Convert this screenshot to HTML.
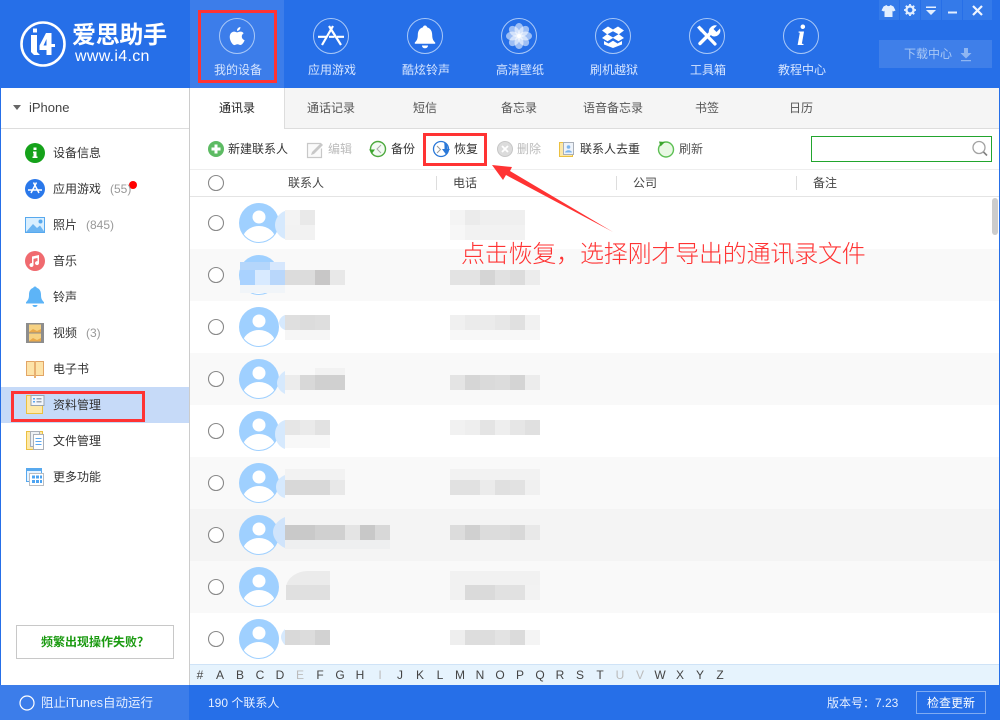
<!DOCTYPE html>
<html lang="zh-CN">
<head>
<meta charset="utf-8">
<title>爱思助手</title>
<style>
html,body{margin:0;padding:0;width:1000px;height:720px;overflow:hidden;background:#fff}
body{position:relative;font-family:"Liberation Sans","Noto Sans CJK SC",sans-serif;font-size:12px;color:#333}
.b{position:absolute}
.t{position:absolute;white-space:nowrap;line-height:16px;font-size:12px}
.n{color:#d6e5ff;width:94px;text-align:center;top:62px}
.tab{color:#555;width:94px;text-align:center;top:100px}
.s{left:53px;color:#333}
.c{color:#999}
.h{top:175px;color:#444}
.az{position:absolute;left:190px;top:664px;height:21px;width:802px;display:flex;line-height:22px;color:#444;font-size:12px}
.az span{width:20px;text-align:center}
.az i{font-style:normal;color:#bbb;width:20px;text-align:center}
svg{position:absolute;left:0;top:0}
</style>
</head>
<body>
<!-- backgrounds -->
<div class="b" style="left:0;top:0;width:1000px;height:88px;background:#266fe8"></div>
<div class="b" style="left:190px;top:0;width:94px;height:88px;background:#3c7dea"></div>
<div class="b" style="left:190px;top:88px;width:810px;height:40px;background:#f5f5f5"></div>
<div class="b" style="left:190px;top:128px;width:810px;height:1px;background:#ddd"></div>
<div class="b" style="left:190px;top:88px;width:94px;height:41px;background:#fff"></div>
<div class="b" style="left:284px;top:88px;width:1px;height:40px;background:#ddd"></div>
<div class="b" style="left:0;top:88px;width:1px;height:597px;background:#266fe8"></div>
<div class="b" style="left:999px;top:88px;width:1px;height:597px;background:#266fe8"></div>
<div class="b" style="left:189px;top:88px;width:1px;height:597px;background:#ccc"></div>
<div class="b" style="left:1px;top:128px;width:188px;height:1px;background:#ddd"></div>
<div class="b" style="left:1px;top:387px;width:188px;height:36px;background:#c6daf8"></div>
<div class="b" style="left:190px;top:169px;width:809px;height:1px;background:#eee"></div>
<div class="b" style="left:190px;top:196px;width:809px;height:1px;background:#e4e4e4"></div>
<div class="b" style="left:190px;top:249px;width:809px;height:52px;background:#f9f9f9"></div>
<div class="b" style="left:190px;top:353px;width:809px;height:52px;background:#f9f9f9"></div>
<div class="b" style="left:190px;top:457px;width:809px;height:52px;background:#f9f9f9"></div>
<div class="b" style="left:190px;top:509px;width:809px;height:52px;background:#f4f4f4"></div>
<div class="b" style="left:190px;top:561px;width:809px;height:52px;background:#f9f9f9"></div>
<div class="b" style="left:190px;top:664px;width:809px;height:21px;background:#e6f3fd;box-shadow:inset 0 1px 0 #cfe3f7"></div>
<div class="b" style="left:0;top:685px;width:1000px;height:35px;background:#266fe8"></div>
<div class="b" style="left:0;top:685px;width:189px;height:35px;background:#3c7dea"></div>
<!-- window buttons -->
<div class="b" style="left:879px;top:0;width:20px;height:20px;background:#347ae9"></div>
<div class="b" style="left:900px;top:0;width:20px;height:20px;background:#347ae9"></div>
<div class="b" style="left:921px;top:0;width:20px;height:20px;background:#347ae9"></div>
<div class="b" style="left:942px;top:0;width:20px;height:20px;background:#347ae9"></div>
<div class="b" style="left:963px;top:0;width:29px;height:20px;background:#347ae9"></div>
<div class="b" style="left:879px;top:40px;width:113px;height:28px;background:#3f7fe9"></div>
<!-- search -->
<div class="b" style="left:811px;top:136px;width:179px;height:24px;border:1px solid #22a52e"></div>
<!-- header separators -->
<div class="b" style="left:436px;top:176px;width:1px;height:14px;background:#ddd"></div>
<div class="b" style="left:616px;top:176px;width:1px;height:14px;background:#ddd"></div>
<div class="b" style="left:796px;top:176px;width:1px;height:14px;background:#ddd"></div>
<div class="b" style="left:992px;top:198px;width:6px;height:37px;background:#ccc;border-radius:3px"></div>
<!-- bottom help button -->
<div class="b" style="left:16px;top:625px;width:156px;height:32px;border:1px solid #c8c8c8;background:#fff"></div>
<div class="b" style="left:916px;top:691px;width:68px;height:21px;border:1px solid #7fabf2"></div>

<svg width="1000" height="720" viewBox="0 0 1000 720" xmlns="http://www.w3.org/2000/svg">
<defs>
<clipPath id="avc"><circle cx="259" cy="223" r="19"/></clipPath>
<g id="row">
<circle cx="216" cy="223" r="7.5" fill="#fff" stroke="#8a8a8a" stroke-width="1.100"/>
<circle cx="259" cy="223" r="20" fill="#9fd0ff"/>
<circle cx="259" cy="217" r="6.500" fill="#fff"/>
<ellipse cx="259" cy="241" rx="17" ry="15" fill="#fff" clip-path="url(#avc)"/>
</g>
</defs>
<!-- logo -->
<circle cx="43" cy="44" r="21.500" fill="none" stroke="#fff" stroke-width="2.600"/>
<path d="M31 35h6v17l3 3h-6l-3-3zM33 28.500h4v4h-4z" fill="#fff"/>
<path d="M46 33h5.500v22h-5v-5h-7v-4.500zM46.500 39l-3 6.500h3z" fill="#fff" fill-rule="evenodd"/>
<path d="M51 44h4v3h-4z" fill="#fff"/>
<!-- nav circles -->
<g fill="none" stroke="#a9c8f7" stroke-width="1">
<circle cx="237" cy="36" r="17.500"/><circle cx="331" cy="36" r="17.500"/><circle cx="425" cy="36" r="17.500"/><circle cx="519" cy="36" r="17.500"/><circle cx="613" cy="36" r="17.500"/><circle cx="707" cy="36" r="17.500"/><circle cx="801" cy="36" r="17.500"/>
</g>
<!-- apple -->
<g transform="translate(0,-1)" fill="#fff">
<path d="M241.800 37.600c0-2.200 1.800-3.200 1.900-3.300-1-1.500-2.600-1.700-3.200-1.700-1.400-.1-2.700.8-3.400.8-.7 0-1.800-.8-2.900-.8-1.500 0-2.900.9-3.700 2.200-1.600 2.700-.4 6.800 1.100 9 .8 1.100 1.700 2.300 2.900 2.300 1.200-.1 1.600-.8 3-.8 1.400 0 1.800.8 3 .7 1.200 0 2-1.100 2.800-2.200.9-1.300 1.200-2.500 1.300-2.600-.1 0-2.800-1-2.800-3.600z"/>
<path d="M239.500 30.800c.6-.8 1-1.800.9-2.800-.9 0-1.900.6-2.500 1.300-.6.6-1 1.600-.9 2.600 1 .1 1.900-.4 2.500-1.100z"/>
</g>
<!-- app store -->
<g stroke="#fff" stroke-width="2.200" fill="none">
<path d="M333 26L322 45"/><path d="M329 26L341 45"/>
<path d="M318 36.800h8M329 36.800h5.500M337 36.800h7"/>
</g>
<!-- bell -->
<path d="M425 25.500c1.200 0 2 .8 2 1.800 3.600 1 5.200 4 5.200 7.700 0 4 1.300 6 3 7.500v1.300h-20.400v-1.300c1.700-1.500 3-3.500 3-7.500 0-3.700 1.600-6.700 5.200-7.700 0-1 .8-1.800 2-1.800zM422 45.500h6c0 1.700-1.300 2.800-3 2.800s-3-1.100-3-2.800z" fill="#fff"/>
<!-- flower -->
<g fill="#fff" fill-opacity=".55">
<ellipse cx="519" cy="29.500" rx="4.500" ry="6.500"/><ellipse cx="519" cy="42.500" rx="4.500" ry="6.500"/><ellipse cx="512.500" cy="36" rx="6.500" ry="4.500"/><ellipse cx="525.500" cy="36" rx="6.500" ry="4.500"/>
<ellipse cx="514.500" cy="31.500" rx="4.500" ry="6.500" transform="rotate(-45 514.500 31.500)"/><ellipse cx="523.500" cy="31.500" rx="4.500" ry="6.500" transform="rotate(45 523.500 31.500)"/>
<ellipse cx="514.500" cy="40.500" rx="4.500" ry="6.500" transform="rotate(45 514.500 40.500)"/><ellipse cx="523.500" cy="40.500" rx="4.500" ry="6.500" transform="rotate(-45 523.500 40.500)"/>
</g>
<circle cx="519" cy="36" r="2" fill="#fff"/>
<!-- box -->
<path d="M608 26.500l5 3 5-3 6 4-5 3.800 5 3.700-5.500 3.200-5.500-3.200-5.500 3.200-5.500-3.200 5-3.700-5-3.800zM607.500 34.300l5.500 3.200 5.500-3.200-5.500-3.100z" fill="#fff" fill-rule="evenodd"/>
<path d="M604 41l4.500 2.500 4.500-2.700 4.500 2.700 4.500-2.500v3.500l-9 3.500-9-3.500z" fill="#fff"/>
<!-- tools -->
<g stroke="#fff" fill="none" stroke-linecap="round">
<path d="M700 43.500L712 31.500" stroke-width="3.400"/>
<path d="M701 29.500l14 14.500" stroke-width="3.200"/>
</g>
<path d="M711 27a6 6 0 0 1 6-1.500l-3.500 3.500 3 3 3.500-3.500a6 6 0 0 1-8 7.500l-3-3a6 6 0 0 1 2-6z" fill="#fff"/>
<path d="M697 27.500l2.500-2 4 4-2.500 2.500z" fill="#fff"/>
<!-- window icons -->
<path d="M884 6l3-1.500c1 1.500 3 1.500 4 0l3 1.500 2 4-2.500 1-.5-1v6.500h-8v-6.500l-.5 1-2.500-1z" fill="#e3efff" transform="translate(-.5,.5)"/>
<circle cx="910" cy="10" r="3.600" fill="none" stroke="#e3efff" stroke-width="2.400"/>
<g stroke="#e3efff" stroke-width="1.800"><path d="M910 4v2.500M910 13.500V16M904 10h2.500M913.500 10H916M905.800 5.800l1.700 1.700M912.500 12.500l1.700 1.700M905.800 14.200l1.700-1.700M912.500 7.500l1.700-1.700"/></g>
<path d="M926 6.500h10v1.500h-10zM926 10h10l-5 5z" fill="#e3efff"/>
<path d="M948 11.500h9v2h-9z" fill="#e3efff"/>
<path d="M973 6l9 9M982 6l-9 9" stroke="#f0f6ff" stroke-width="2.200"/>
<path d="M964 48h4v5h3.500l-5.500 5.500-5.500-5.500h3.500zM961 60h10v1.300h-10z" fill="#8fb6f2"/>
<!-- sidebar icons -->
<path d="M13 105h8l-4 5z" fill="#666"/>
<circle cx="35" cy="153" r="10" fill="#15a21a"/>
<path d="M33.500 147.500h3v2.500h-3zM33 151.500h3.500v5h1v1.500h-5v-1.500h1v-3.500h-.5z" fill="#fff"/>
<circle cx="35" cy="189" r="10" fill="#2a78ea"/>
<path d="M36.500 182.500L31 193M33.500 182.500L39 193M28 190h14" stroke="#fff" stroke-width="1.500" fill="none"/>
<rect x="25.500" y="217.500" width="19" height="15" fill="#d9efff" stroke="#58a9ee"/>
<path d="M26 232l7-8 4 4 3-2.500 4.500 6.500z" fill="#6cb5f2"/>
<circle cx="40.500" cy="221.500" r="2" fill="#58a9ee"/>
<circle cx="35" cy="261" r="10" fill="#f06a6f"/>
<path d="M32 256.500l7-1.500v8a2 2 0 1 1-1.500-1.800V258l-4 .9v6a2 2 0 1 1-1.500-1.800z" fill="#fff"/>
<path d="M35 286.500c1 0 1.500.6 1.700 1.300 3 1 4.300 3.500 4.300 7 0 4 1 5.500 3 7.500v1.200h-18v-1.200c2-2 3-3.500 3-7.500 0-3.500 1.300-6 4.300-7 .2-.7.700-1.300 1.700-1.300z" fill="#5db4f7"/>
<path d="M32.500 305h5c0 1-1 2-2.500 2s-2.500-1-2.500-2z" fill="#5db4f7"/>
<rect x="26" y="323" width="18" height="20" fill="#8d8d8d"/>
<rect x="29" y="324.500" width="12" height="8" fill="#f6d283"/><rect x="29" y="333.500" width="12" height="8" fill="#f6d283"/>
<path d="M29 332l4-3 4 2 4-2v3.500H29zM29 341l4-3 4 2 4-2v3.500H29z" fill="#e9a94a"/>
<path d="M26.500 361.500h8v14h-8zM35.500 361.500h8v14h-8z" fill="#fde3a8" stroke="#e2a566"/>
<rect x="34" y="361" width="2" height="17" fill="#e8b070"/>
<rect x="26.500" y="395.500" width="16" height="18" fill="#fde8a8" stroke="#ebc040"/>
<rect x="31" y="395.500" width="13" height="10" fill="#f3f6fb" stroke="#9aa4b0"/>
<path d="M33 398h2v1.500h-2zM33 401h2v1.500h-2z" fill="#5aa7f0"/><path d="M36.500 398h5v1.500h-5zM36.500 401h5v1.500h-5z" fill="#9aa4b0"/>
<rect x="26.500" y="431.500" width="16" height="18" fill="#fde8a8" stroke="#ebc040"/>
<rect x="30.500" y="431.500" width="9" height="15" fill="#eef1f5" stroke="#a9afb8"/>
<rect x="33.500" y="434.500" width="10" height="15" fill="#fff" stroke="#a9afb8"/>
<path d="M35.500 438.500h6M35.500 441.500h6M35.500 444.500h6" stroke="#5aa7f0"/>
<rect x="26.500" y="468.500" width="15" height="13" fill="#e6f3ff" stroke="#58a9ee"/>
<rect x="26" y="468" width="16" height="3" fill="#58a9ee"/>
<rect x="29.500" y="473.500" width="14" height="12" fill="#fff" stroke="#b9bdc2"/>
<g fill="#4da4f2"><rect x="32" y="475.500" width="3" height="3"/><rect x="36" y="475.500" width="3" height="3"/><rect x="40" y="475.500" width="2" height="3"/><rect x="32" y="480" width="3" height="3"/><rect x="36" y="480" width="3" height="3"/><rect x="40" y="480" width="2" height="3"/></g>
<circle cx="133" cy="185" r="4" fill="#f00"/>
<!-- toolbar icons -->
<circle cx="216" cy="149" r="8" fill="#5dbb63"/>
<path d="M214.500 144.500h3v3h3v3h-3v3h-3v-3h-3v-3h3z" fill="#fff"/>
<path d="M321 143.500h-13.500v14h14v-9" fill="#fafafa" stroke="#c8c8c8" stroke-width="1.200"/>
<path d="M311 155l1-3 9-9 2 2-9 9z" fill="#c8c8c8"/>
<circle cx="378" cy="149" r="7.500" fill="#f3fbf3" stroke="#4eaa3f" stroke-width="1.400"/>
<path d="M369 149.500h6l-3 4z" fill="#3da52f"/>
<path d="M381 145l-4 4 4 4" fill="none" stroke="#aaa" stroke-width="1"/>
<circle cx="441" cy="149" r="7.500" fill="#fff" stroke="#2a78d8" stroke-width="1.300"/>
<path d="M437 146l3.500 3.500-3.500 3.500" fill="none" stroke="#999" stroke-width="1"/>
<path d="M444 142c3 1.500 3.500 4 3.500 7h2.500l-4 5.500-4-5.500h2.500c0-2.500 0-5-.5-7z" fill="#2a78d8"/>
<circle cx="505" cy="149" r="7.500" fill="#dcdcdc" stroke="#c6c6c6" stroke-width="1"/>
<path d="M502 146l6 6M508 146l-6 6" stroke="#fff" stroke-width="1.800"/>
<rect x="559.500" y="142.500" width="13" height="14" fill="#fde8a8" stroke="#ebc040"/>
<rect x="563.500" y="142.500" width="10" height="12" fill="#eef3fa" stroke="#a9afb8"/>
<circle cx="568.500" cy="147" r="1.800" fill="#7db4ec"/><path d="M565 152.500c.5-3 6.500-3 7 0z" fill="#7db4ec"/>
<circle cx="666" cy="149.500" r="7.500" fill="#e9f8e4" stroke="#5cbf53" stroke-width="1.400"/>
<path d="M659 141.500l6 .5-4.500 4.500z" fill="#3da52f"/>
<circle cx="979" cy="147.500" r="6" fill="none" stroke="#a2a2a2" stroke-width="1.300"/>
<path d="M983.500 152l3.500 3.500" stroke="#808080" stroke-width="1.600"/>
<circle cx="216" cy="183" r="7.500" fill="#fff" stroke="#8a8a8a" stroke-width="1.100"/>
<!-- rows -->
<use href="#row"/><use href="#row" y="52"/><use href="#row" y="104"/><use href="#row" y="156"/><use href="#row" y="208"/><use href="#row" y="260"/><use href="#row" y="312"/><use href="#row" y="364"/><use href="#row" y="416"/>
<!-- mosaics row1 -->
<path d="M285 211c-6 2-10 8-10 14s4 12 10 14z" fill="#d6e9fd"/>
<g><rect x="285" y="210" width="15" height="15" fill="#f3f3f3"/><rect x="300" y="210" width="15" height="15" fill="#e9e9e9"/><rect x="285" y="225" width="30" height="15" fill="#f2f2f2"/>
<rect x="450" y="210" width="15" height="15" fill="#f4f4f4"/><rect x="465" y="210" width="15" height="15" fill="#ebebeb"/><rect x="480" y="210" width="45" height="15" fill="#efefef"/><rect x="450" y="225" width="15" height="15" fill="#f7f7f7"/><rect x="465" y="225" width="60" height="15" fill="#f2f2f2"/></g>
<!-- row2 -->
<rect x="240" y="262" width="30" height="8" fill="#b4d6fb"/><rect x="270" y="262" width="15" height="8" fill="#d6e7fd"/>
<rect x="240" y="270" width="15" height="15" fill="#a9d2ff"/><rect x="255" y="270" width="15" height="15" fill="#d8eaff"/><rect x="270" y="270" width="15" height="15" fill="#b9d7fb"/>
<rect x="240" y="285" width="45" height="8" fill="#f1f5f9"/>
<rect x="285" y="270" width="30" height="15" fill="#dcdcdc"/><rect x="315" y="270" width="15" height="15" fill="#c8c7c7"/><rect x="330" y="270" width="15" height="15" fill="#e8e8e8"/>
<rect x="450" y="270" width="30" height="15" fill="#e3e3e3"/><rect x="480" y="270" width="15" height="15" fill="#d5d5d5"/><rect x="495" y="270" width="15" height="15" fill="#e1e1e1"/><rect x="510" y="270" width="15" height="15" fill="#dcdcdc"/><rect x="525" y="270" width="15" height="15" fill="#ececec"/>
<!-- row3 -->
<path d="M285 315c-3 1-6 4-6 7.500s3 6.500 6 7.500z" fill="#d6e9fd"/>
<rect x="285" y="315" width="15" height="15" fill="#dfdfdf"/><rect x="300" y="315" width="15" height="15" fill="#dcdcdc"/><rect x="315" y="315" width="15" height="15" fill="#dedede"/>
<rect x="285" y="330" width="45" height="10" fill="#f6f6f6"/>
<rect x="450" y="315" width="15" height="15" fill="#f0f0f0"/><rect x="465" y="315" width="30" height="15" fill="#ebebeb"/><rect x="495" y="315" width="15" height="15" fill="#e7e7e7"/><rect x="510" y="315" width="15" height="15" fill="#e0e0e0"/><rect x="525" y="315" width="15" height="15" fill="#f1f1f1"/>
<rect x="450" y="330" width="90" height="10" fill="#f8f8f8"/>
<!-- row4 -->
<path d="M285 371c-4 2-8 7-8 12s4 9 8 11z" fill="#d6e9fd"/>
<rect x="285" y="375" width="15" height="15" fill="#ececec"/><rect x="300" y="375" width="15" height="15" fill="#d8d8d8"/><rect x="315" y="375" width="30" height="15" fill="#d0d0d0"/>
<rect x="315" y="368" width="30" height="7" fill="#f2f2f2"/>
<rect x="450" y="375" width="15" height="15" fill="#e4e4e4"/><rect x="465" y="375" width="15" height="15" fill="#d6d6d6"/><rect x="480" y="375" width="15" height="15" fill="#dadada"/><rect x="495" y="375" width="15" height="15" fill="#dcdcdc"/><rect x="510" y="375" width="15" height="15" fill="#d4d4d4"/><rect x="525" y="375" width="15" height="15" fill="#ececec"/>
<!-- row5 -->
<path d="M285 420c-6 2-10 7-10 14s4 13 10 15z" fill="#d6e9fd"/>
<rect x="285" y="420" width="15" height="15" fill="#e6e6e6"/><rect x="300" y="420" width="15" height="15" fill="#eaeaea"/><rect x="315" y="420" width="15" height="15" fill="#e2e2e2"/>
<rect x="285" y="435" width="45" height="13" fill="#f8f8f8"/>
<rect x="450" y="420" width="15" height="15" fill="#f1f1f1"/><rect x="465" y="420" width="15" height="15" fill="#eeeeee"/><rect x="480" y="420" width="15" height="15" fill="#e4e4e4"/><rect x="495" y="420" width="15" height="15" fill="#eeeeee"/><rect x="510" y="420" width="15" height="15" fill="#e6e6e6"/><rect x="525" y="420" width="15" height="15" fill="#e0e0e0"/>
<!-- row6 -->
<path d="M285 475c-5 2-9 6-9 12s4 10 9 11z" fill="#d6e9fd"/>
<rect x="285" y="469" width="60" height="11" fill="#f2f2f2"/>
<rect x="285" y="480" width="45" height="15" fill="#d8d8d8"/><rect x="330" y="480" width="15" height="15" fill="#e8e8e8"/>
<rect x="450" y="469" width="90" height="11" fill="#f2f2f2"/>
<rect x="450" y="480" width="30" height="15" fill="#e1e1e1"/><rect x="480" y="480" width="15" height="15" fill="#ebebeb"/><rect x="495" y="480" width="15" height="15" fill="#e0e0e0"/><rect x="510" y="480" width="15" height="15" fill="#e2e2e2"/><rect x="525" y="480" width="15" height="15" fill="#f0f0f0"/>
<!-- row7 -->
<path d="M285 517c-7 3-12 9-12 15s5 13 12 16z" fill="#d0e4fb"/>
<rect x="285" y="525" width="30" height="15" fill="#c9c9c9"/><rect x="315" y="525" width="30" height="15" fill="#d0d0d0"/><rect x="345" y="525" width="15" height="15" fill="#e4e4e4"/><rect x="360" y="525" width="15" height="15" fill="#c8c8c8"/><rect x="375" y="525" width="15" height="15" fill="#d8d8d8"/>
<rect x="285" y="540" width="105" height="9" fill="#eeeff0"/>
<rect x="450" y="525" width="15" height="15" fill="#dcdcdc"/><rect x="465" y="525" width="15" height="15" fill="#d0d0d0"/><rect x="480" y="525" width="30" height="15" fill="#dcdcdc"/><rect x="510" y="525" width="15" height="15" fill="#d8d8d8"/><rect x="525" y="525" width="15" height="15" fill="#e8e8e8"/>
<!-- row8 -->
<path d="M286 600v-12c0-9 10-17 22-17h22v29z" fill="#ebebeb"/>
<path d="M286 600v-15h44v15z" fill="#e0e0e0"/>
<rect x="450" y="571" width="90" height="14" fill="#f1f1f1"/>
<rect x="450" y="585" width="15" height="15" fill="#f1f1f1"/><rect x="465" y="585" width="30" height="15" fill="#dadada"/><rect x="495" y="585" width="30" height="15" fill="#e1e1e1"/><rect x="525" y="585" width="15" height="15" fill="#f2f2f2"/>
<!-- row9 -->
<path d="M285 629c-2 2-4 5-4 8s2 6 4 8z" fill="#d6e9fd"/>
<rect x="285" y="630" width="15" height="15" fill="#d9d9d9"/><rect x="300" y="630" width="15" height="15" fill="#dcdcdc"/><rect x="315" y="630" width="15" height="15" fill="#d2d2d2"/>
<rect x="450" y="630" width="15" height="15" fill="#eeeeee"/><rect x="465" y="630" width="30" height="15" fill="#dddddd"/><rect x="495" y="630" width="15" height="15" fill="#e3e3e3"/><rect x="510" y="630" width="15" height="15" fill="#dbdbdb"/><rect x="525" y="630" width="15" height="15" fill="#f4f4f4"/>
<!-- footer circle -->
<circle cx="27" cy="703" r="7" fill="none" stroke="#fff" stroke-width="1.200"/>
</svg>

<!-- logo text -->
<div class="t" style="left:72px;top:22px;font-size:24px;line-height:28px;font-weight:700;color:#fff;letter-spacing:-.3px">爱思助手</div>
<div class="t" style="left:75px;top:48px;font-size:16px;line-height:18px;color:#fff;letter-spacing:.3px">www.i4.cn</div>
<!-- nav -->
<div class="t n" style="left:191px">我的设备</div>
<div class="t n" style="left:285px">应用游戏</div>
<div class="t n" style="left:379px">酷炫铃声</div>
<div class="t n" style="left:473px">高清壁纸</div>
<div class="t n" style="left:567px">刷机越狱</div>
<div class="t n" style="left:661px">工具箱</div>
<div class="t n" style="left:755px">教程中心</div>
<div class="t" style="left:801px;width:0;top:22px;font:italic 700 30px/28px 'Liberation Serif',serif;color:#fff;display:flex;justify-content:center">i</div>
<div class="t" style="left:904px;top:46px;color:#a9c8f5">下载中心</div>
<!-- tabs -->
<div class="t tab" style="left:190px;color:#222">通讯录</div>
<div class="t tab" style="left:284px">通话记录</div>
<div class="t tab" style="left:378px">短信</div>
<div class="t tab" style="left:472px">备忘录</div>
<div class="t tab" style="left:566px">语音备忘录</div>
<div class="t tab" style="left:660px">书签</div>
<div class="t tab" style="left:754px">日历</div>
<!-- sidebar -->
<div class="t" style="left:29px;top:100px;color:#444;font-size:13px">iPhone</div>
<div class="t s" style="top:145px">设备信息</div>
<div class="t s" style="top:181px">应用游戏</div><div class="t c" style="left:110px;top:181px">(55)</div>
<div class="t s" style="top:217px">照片</div><div class="t c" style="left:86px;top:217px">(845)</div>
<div class="t s" style="top:253px">音乐</div>
<div class="t s" style="top:289px">铃声</div>
<div class="t s" style="top:325px">视频</div><div class="t c" style="left:86px;top:325px">(3)</div>
<div class="t s" style="top:361px">电子书</div>
<div class="t s" style="top:397px">资料管理</div>
<div class="t s" style="top:433px">文件管理</div>
<div class="t s" style="top:469px">更多功能</div>
<div class="t" style="left:16px;width:158px;top:634px;text-align:center;font-weight:700;color:#1a9a10">频繁出现操作失败？</div>
<!-- toolbar -->
<div class="t" style="left:228px;top:141px">新建联系人</div>
<div class="t" style="left:328px;top:141px;color:#bbb">编辑</div>
<div class="t" style="left:391px;top:141px">备份</div>
<div class="t" style="left:454px;top:141px">恢复</div>
<div class="t" style="left:517px;top:141px;color:#bbb">删除</div>
<div class="t" style="left:580px;top:141px">联系人去重</div>
<div class="t" style="left:679px;top:141px;color:#555">刷新</div>
<!-- header -->
<div class="t h" style="left:288px">联系人</div>
<div class="t h" style="left:453px">电话</div>
<div class="t h" style="left:633px">公司</div>
<div class="t h" style="left:813px">备注</div>
<!-- alphabet -->
<div class="az"><span>#</span><span>A</span><span>B</span><span>C</span><span>D</span><i>E</i><span>F</span><span>G</span><span>H</span><i>I</i><span>J</span><span>K</span><span>L</span><span>M</span><span>N</span><span>O</span><span>P</span><span>Q</span><span>R</span><span>S</span><span>T</span><i>U</i><i>V</i><span>W</span><span>X</span><span>Y</span><span>Z</span></div>
<!-- footer -->
<div class="t" style="left:41px;top:695px;color:#e6efff;font-size:12.500px">阻止iTunes自动运行</div>
<div class="t" style="left:208px;top:695px;color:#e6efff">190 个联系人</div>
<div class="t" style="left:827px;top:695px;color:#e6efff">版本号：7.23</div>
<div class="t" style="left:916px;width:70px;top:695px;text-align:center;color:#fff">检查更新</div>

<!-- annotations -->
<svg width="1000" height="720" viewBox="0 0 1000 720" xmlns="http://www.w3.org/2000/svg" style="z-index:5">
<rect x="199.500" y="11.500" width="76" height="70" fill="none" stroke="#f33" stroke-width="3"/>
<rect x="12.500" y="392.500" width="131" height="28" fill="none" stroke="#f33" stroke-width="3"/>
<rect x="424.500" y="134.500" width="61" height="30" fill="none" stroke="#f33" stroke-width="3"/>
<polygon points="492,165 512,167 510,171 613,232 506,175 503,180" fill="#f33"/>
</svg>
<div class="t" style="left:461px;top:240px;font-size:24px;line-height:30px;font-weight:300;color:#f33;letter-spacing:-.2px;z-index:6">点击恢复，选择刚才导出的通讯录文件</div>
</body>
</html>
